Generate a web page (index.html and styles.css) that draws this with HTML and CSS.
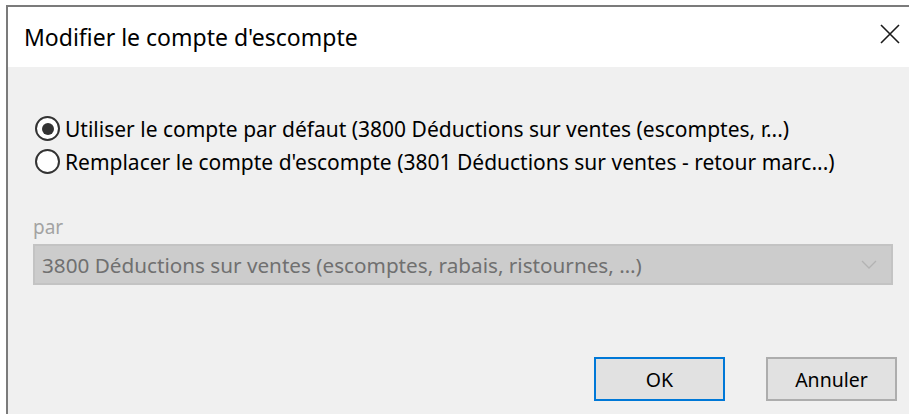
FILE: index.html
```html
<!DOCTYPE html>
<html lang="fr">
<head>
<meta charset="utf-8">
<title>Modifier le compte d'escompte</title>
<link rel="stylesheet" href="styles.css">
</head>
<body>
<div class="backdrop"></div>
<div class="window">
  <div class="titlebar">
    <span class="title">Modifier le compte d'escompte</span>
    <svg class="close" width="20" height="20" viewBox="0 0 20 20" aria-label="Fermer">
      <path d="M1 1 L19 19 M19 1 L1 19" stroke="#1a1a1a" stroke-width="1.6" fill="none"/>
    </svg>
  </div>
  <div class="content">
    <div class="choices">
      <label class="radio-row">
        <span class="radio checked"></span>
        <span class="radio-text">Utiliser le compte par défaut (3800 Déductions sur ventes (escomptes, r...)</span>
      </label>
      <label class="radio-row">
        <span class="radio"></span>
        <span class="radio-text">Remplacer le compte d'escompte (3801 Déductions sur ventes - retour marc...)</span>
      </label>
    </div>
    <div class="field">
      <span class="field-label">par</span>
      <div class="combo">
        <span class="combo-value">3800 Déductions sur ventes (escomptes, rabais, ristournes, …)</span>
        <svg class="chevron" width="16" height="9" viewBox="0 0 16 9">
          <path d="M1 1 L8 8 L15 1" stroke="#b3b3b3" stroke-width="1.3" fill="none"/>
        </svg>
      </div>
    </div>
    <div class="actions">
      <button class="btn btn-default" type="button">OK</button>
      <button class="btn" type="button">Annuler</button>
    </div>
  </div>
</div>
</body>
</html>
```
FILE: styles.css
```css
html, body {
  margin: 0;
  padding: 0;
}

body {
  background: #ffffff;
  font-family: "Noto Sans", "Open Sans", sans-serif;
  color: #000000;
  width: 909px;
  height: 414px;
  overflow: hidden;
}

/* white strip of the window lying behind the dialog */
.backdrop {
  height: 5px;
}

.window {
  margin-left: 6px;
  border-left: 2px solid #7b7b7b;
  border-top: 2px solid #7b7b7b;
  height: 407px;
  background: #f0f0f0;
  display: flex;
  flex-direction: column;
}

.titlebar {
  height: 60px;
  flex: none;
  background: #ffffff;
  display: flex;
  align-items: center;
  justify-content: space-between;
  padding: 0 9px 0 16px;
}

.title {
  font-size: 23px;
  color: #000;
  margin-top: 0;
}

.close {
  display: block;
  margin-top: -6px;
}

.content {
  flex: 1;
  display: flex;
  flex-direction: column;
  padding: 45px 0 0 25px;
}

.choices {
  display: flex;
  flex-direction: column;
}

.radio-row {
  display: flex;
  align-items: center;
  height: 33px;
  padding-left: 2px;
}

.radio {
  width: 25px;
  height: 25px;
  border: 2px solid #333333;
  border-radius: 50%;
  background: #ffffff;
  box-sizing: border-box;
  flex: none;
  position: relative;
  margin-right: 5px;
}

.radio.checked::after {
  content: "";
  position: absolute;
  left: 4.5px;
  top: 4.5px;
  width: 12px;
  height: 12px;
  border-radius: 50%;
  background: #333333;
}

.radio-text {
  font-size: 21px;
  white-space: nowrap;
}

.field {
  display: flex;
  flex-direction: column;
  margin-top: 38px;
}

.field-label {
  font-size: 19px;
  color: #a3a3a3;
  height: 28px;
  line-height: 22px;
}

.combo {
  width: 860px;
  height: 41px;
  box-sizing: border-box;
  border: 2px solid #c3c3c3;
  background: #cccccc;
  display: flex;
  align-items: center;
  justify-content: space-between;
  padding: 0 14px 0 7px;
}

.combo-value {
  font-size: 20.7px;
  color: #707070;
  white-space: nowrap;
}

.chevron {
  display: block;
}

.actions {
  display: flex;
  gap: 41px;
  margin-top: 72px;
  padding-left: 561px;
}

.btn {
  width: 131px;
  height: 44px;
  box-sizing: border-box;
  background: #e1e1e1;
  border: 2px solid #adadad;
  font-family: "Noto Sans", "Open Sans", sans-serif;
  font-size: 19.5px;
  color: #000;
  padding: 0;
  margin: 0;
}

.btn-default {
  border-color: #0078d7;
}
```
